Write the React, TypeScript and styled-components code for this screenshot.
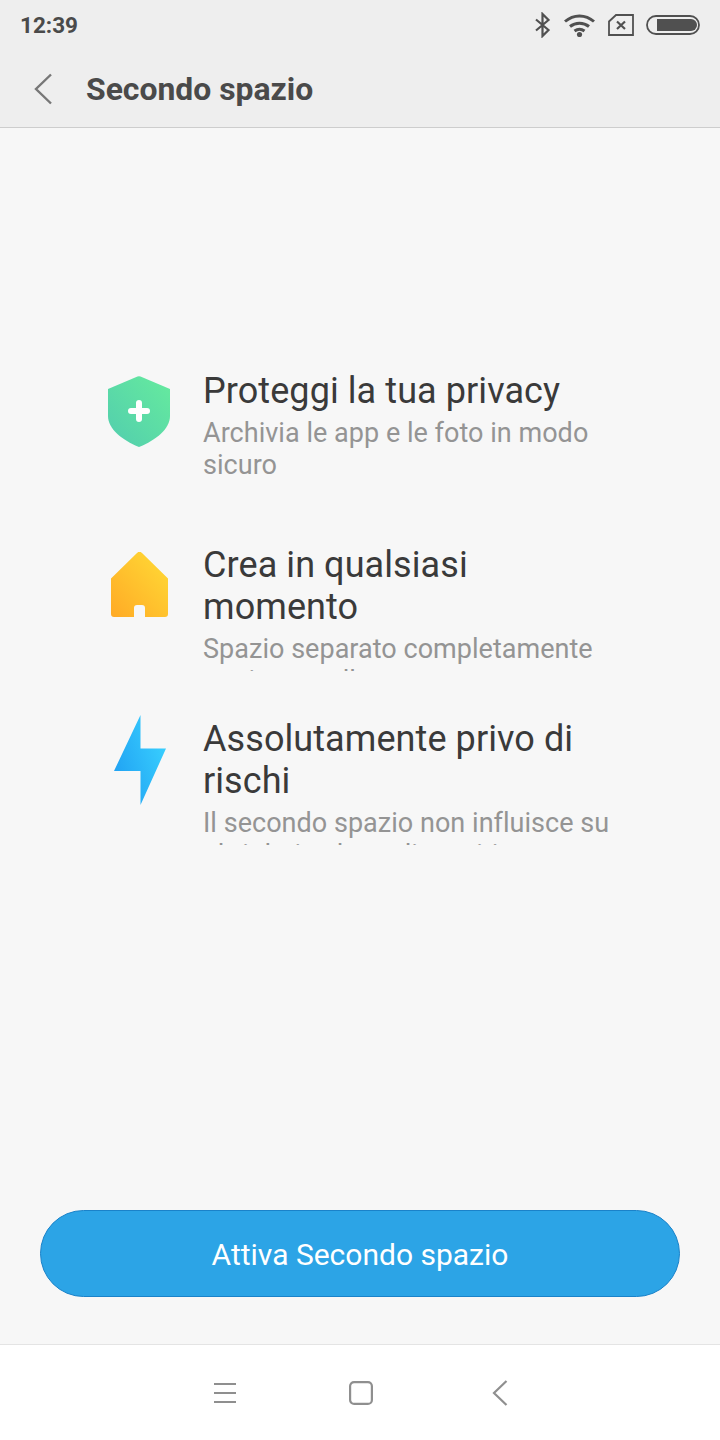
import React from "react";
import styled, { createGlobalStyle } from "styled-components";

const Global = createGlobalStyle`
  html, body { margin: 0; padding: 0; background: #f7f7f7; }
  * { box-sizing: border-box; }
`;

const Screen = styled.div`
  width: 720px;
  height: 1440px;
  display: flex;
  flex-direction: column;
  background: #f7f7f7;
  font-family: Roboto, "Noto Sans", sans-serif;
  overflow: hidden;
`;

const TopArea = styled.header`
  background: #eeeeee;
  border-bottom: 1px solid #cdcdcd;
  height: 128px;
  flex: none;
`;

const StatusBar = styled.div`
  height: 50px;
  display: flex;
  align-items: center;
  justify-content: space-between;
  padding: 0 20px 0 20px;
`;

const Clock = styled.span`
  font-size: 22.500px;
  font-weight: 700;
  color: #4a4a4a;
`;

const StatusIcons = styled.div`
  display: flex;
  align-items: center;
  gap: 12px;
`;

const TitleBar = styled.div`
  height: 77px;
  display: flex;
  align-items: center;
  padding-left: 32px;
  gap: 32px;
`;

const Title = styled.h1`
  margin: 0;
  padding-top: 1px;
  font-size: 31.900px;
  font-weight: 700;
  color: #4a4a4a;
`;

const Main = styled.main`
  flex: 1;
  display: flex;
  flex-direction: column;
  justify-content: space-between;
  padding-top: 242px;
`;

const FeatureList = styled.ul`
  list-style: none;
  margin: 0;
  padding: 0 0 0 104px;
  display: flex;
  flex-direction: column;
  gap: 46px;
`;

const Feature = styled.li`
  display: flex;
  gap: 29px;
  height: 128px;
`;

const IconSlot = styled.div<{ $top: number; $left?: number }>`
  width: 70px;
  flex: none;
  display: flex;
  justify-content: center;
  margin-top: ${(p) => p.$top}px;
  padding-left: ${(p) => p.$left ?? 0}px;
`;

const FeatureText = styled.div`
  width: 408px;
  height: 127px;
  overflow: hidden;
`;

const FeatureTitle = styled.div`
  font-size: 36px;
  letter-spacing: 0.08px;
  line-height: 42px;
  color: #3a3a3a;
`;

const FeatureDesc = styled.div`
  font-size: 27px;
  letter-spacing: 0.03px;
  line-height: 32px;
  margin-top: 5px;
  color: #949494;
`;

const ActionArea = styled.div`
  padding: 0 40px 47px;
`;

const PrimaryButton = styled.button`
  width: 100%;
  height: 87px;
  padding-top: 3px;
  border: 1px solid #1a82c9;
  border-radius: 44px;
  background: #2ca4e6;
  color: #ffffff;
  font-family: inherit;
  font-size: 30px;
  font-weight: 400;
`;

const NavBar = styled.nav`
  height: 96px;
  flex: none;
  background: #ffffff;
  border-top: 1px solid #e4e4e4;
  display: flex;
  align-items: center;
  justify-content: center;
  padding-left: 1px;
  gap: 112px;
`;

const NavBack = styled.svg`
  margin-left: 7px;
`;

export default function App() {
  return (
    <Screen>
      <Global />
      <TopArea>
        <StatusBar>
          <Clock>12:39</Clock>
          <StatusIcons>
            <svg width="17" height="26" viewBox="0 0 17 26" fill="none" stroke="#505050" strokeWidth="2.2">
              <path d="M2 7.5 14.5 18 8.5 24V2l6 6L2 18.5" />
            </svg>
            <svg width="33" height="24" viewBox="0 0 33 24" fill="none" stroke="#505050" strokeWidth="3">
              <path d="M2 8.5C10.5 1 22.5 1 31 8.5" />
              <path d="M7 13.5C12.5 9 20.5 9 26 13.5" />
              <path d="M11.5 18C14.5 15.8 18.5 15.8 21.5 18" />
              <circle cx="16.5" cy="21.5" r="2.6" fill="#505050" stroke="none" />
            </svg>
            <svg width="26" height="22" viewBox="0 0 26 22" fill="none" stroke="#505050" strokeWidth="1.8">
              <path d="M1 7.5 8 1h17v20H1z" />
              <path d="M9 7.5l8 7.5M17 7.5l-8 7.5" strokeWidth="2.2" />
            </svg>
            <svg width="54" height="20" viewBox="0 0 54 20">
              <rect x="1" y="1" width="52" height="18" rx="9" fill="none" stroke="#505050" strokeWidth="1.8" />
              <path d="M11 4h34a6 6 0 0 1 0 12H11z" fill="#505050" />
            </svg>
          </StatusIcons>
        </StatusBar>
        <TitleBar>
          <svg width="22" height="32" viewBox="0 0 22 32" fill="none" stroke="#777777" strokeWidth="2.4">
            <path d="M19 1.5 4 16l15 14.5" />
          </svg>
          <Title>Secondo spazio</Title>
        </TitleBar>
      </TopArea>
      <Main>
        <FeatureList>
          <Feature>
            <IconSlot $top={6}>
              <svg width="62" height="71" viewBox="0 0 62 71">
                <defs>
                  <linearGradient id="shieldFill" x1="1" y1="0" x2="0" y2="1">
                    <stop offset="0" stopColor="#66eb9e" />
                    <stop offset="1" stopColor="#52cdae" />
                  </linearGradient>
                </defs>
                <path
                  d="M29.5.5a4 4 0 0 1 3 0L62 13v27c0 13-14 24-31 31C14 64 0 53 0 40V13z"
                  fill="url(#shieldFill)"
                />
                <path d="M31 27v16M23 35h16" stroke="#ffffff" strokeWidth="6" strokeLinecap="round" />
              </svg>
            </IconSlot>
            <FeatureText>
              <FeatureTitle>Proteggi la tua privacy</FeatureTitle>
              <FeatureDesc>Archivia le app e le foto in modo sicuro</FeatureDesc>
            </FeatureText>
          </Feature>
          <Feature>
            <IconSlot $top={8}>
              <svg width="57" height="65" viewBox="0 0 57 65">
                <defs>
                  <linearGradient id="houseFill" x1="1" y1="0" x2="0" y2="1">
                    <stop offset="0" stopColor="#ffdc36" />
                    <stop offset="1" stopColor="#ffaa26" />
                  </linearGradient>
                </defs>
                <path
                  d="M26 1a3.5 3.5 0 0 1 5 0l26 25.500V62a3 3 0 0 1-3 3H34V56a3 3 0 0 0-3-3h-5a3 3 0 0 0-3 3v9H3a3 3 0 0 1-3-3V26.500z"
                  fill="url(#houseFill)"
                />
              </svg>
            </IconSlot>
            <FeatureText>
              <FeatureTitle>Crea in qualsiasi momento</FeatureTitle>
              <FeatureDesc>Spazio separato completamente e privato nella rete</FeatureDesc>
            </FeatureText>
          </Feature>
          <Feature>
            <IconSlot $top={-3} $left={2}>
              <svg width="52" height="90" viewBox="0 0 52 90">
                <defs>
                  <linearGradient id="boltFill" x1="1" y1="0.2" x2="0" y2="0.8">
                    <stop offset="0" stopColor="#3ad2ff" />
                    <stop offset="1" stopColor="#1f9ff2" />
                  </linearGradient>
                </defs>
                <path d="M26.500 0V33.500H52L26.500 90V56H0z" fill="url(#boltFill)" />
              </svg>
            </IconSlot>
            <FeatureText>
              <FeatureTitle>Assolutamente privo di rischi</FeatureTitle>
              <FeatureDesc>Il secondo spazio non influisce su altri dati sul tuo dispositivo</FeatureDesc>
            </FeatureText>
          </Feature>
        </FeatureList>
        <ActionArea>
          <PrimaryButton>Attiva Secondo spazio</PrimaryButton>
        </ActionArea>
      </Main>
      <NavBar>
        <svg width="24" height="22" viewBox="0 0 24 22" stroke="#8f8f8f" strokeWidth="2.2">
          <path d="M1 2h22M1 11h22M1 20h22" />
        </svg>
        <svg width="24" height="24" viewBox="0 0 24 24" fill="none" stroke="#8f8f8f" strokeWidth="2.2">
          <rect x="1.100" y="1.100" width="21.800" height="21.800" rx="4" />
        </svg>
        <NavBack width="16" height="26" viewBox="0 0 16 26" fill="none" stroke="#8f8f8f" strokeWidth="2.2">
          <path d="M14.500 1 2 13l12.500 12" />
        </NavBack>
      </NavBar>
    </Screen>
  );
}
